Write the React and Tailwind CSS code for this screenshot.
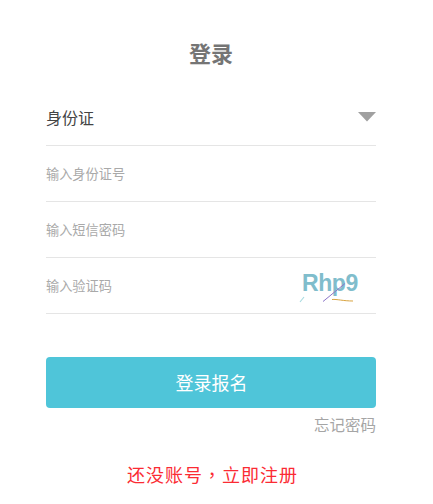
export default function App() {
  const font = { fontFamily: '"Noto Sans CJK SC", "Liberation Sans", sans-serif' };
  return (
    <div style={font} className="w-[433px] h-[504px] bg-white overflow-hidden flex flex-col px-[46px] pr-[57px]">
      <h1 className="mt-[36px] h-[32px] leading-[32px] text-center text-[22px] font-bold text-[#757575]">登录</h1>
      <div className="mt-[22px] h-[56px] flex items-center justify-between border-b border-[#e5e5e5]">
        <span className="text-[16px] text-[#444444] mb-[2px]">身份证</span>
        <svg width="18" height="10" viewBox="0 0 18 10" className="mb-[2px]"><path d="M0 0H18L9 9.5Z" fill="#a0a0a0" /></svg>
      </div>
      <div className="h-[56px] flex items-center border-b border-[#e5e5e5]">
        <span className="text-[13.2px] text-[#a9a9a9]">输入身份证号</span>
      </div>
      <div className="h-[56px] flex items-center border-b border-[#e5e5e5]">
        <span className="text-[13.2px] text-[#a9a9a9]">输入短信密码</span>
      </div>
      <div className="h-[56px] flex items-center justify-between border-b border-[#e5e5e5]">
        <span className="text-[13.2px] text-[#a9a9a9]">输入验证码</span>
        <div className="relative w-[60px] h-[36px] mr-[17px] mt-[4px]">
          <span style={{ fontFamily: '"Liberation Sans", sans-serif' }} className="absolute left-[3px] top-[-2px] text-[23px] leading-[30px] font-bold tracking-[-0.4px] text-[#80bdcc] whitespace-nowrap">Rhp9</span>
          <svg width="60" height="36" viewBox="0 0 60 36" className="absolute left-0 top-0">
            <path d="M1 32L5 27" stroke="#a8dbe0" strokeWidth="1.2" fill="none" />
            <path d="M24 31.5L46 13.5" stroke="#8b74c8" strokeWidth="1" fill="none" />
            <path d="M33 29.5C38 29 44 31 54 31" stroke="#d9a441" strokeWidth="1" fill="none" />
          </svg>
        </div>
      </div>
      <button className="mt-[43px] h-[51px] w-full rounded-[4px] bg-[#4fc5d9] text-white text-[18px] pl-[1px]">登录报名</button>
      <div className="mt-[6px] text-right text-[15.5px] leading-[20px] text-[#a5a5a5]">忘记密码</div>
      <div className="mt-[28px] text-center text-[18px] leading-[24px] text-[#fb2b33] tracking-[1px] pl-[3px]">
        还没账号<span style={{ fontFamily: '"Noto Sans CJK TC", sans-serif' }}>，</span>立即注册
      </div>
    </div>
  );
}
